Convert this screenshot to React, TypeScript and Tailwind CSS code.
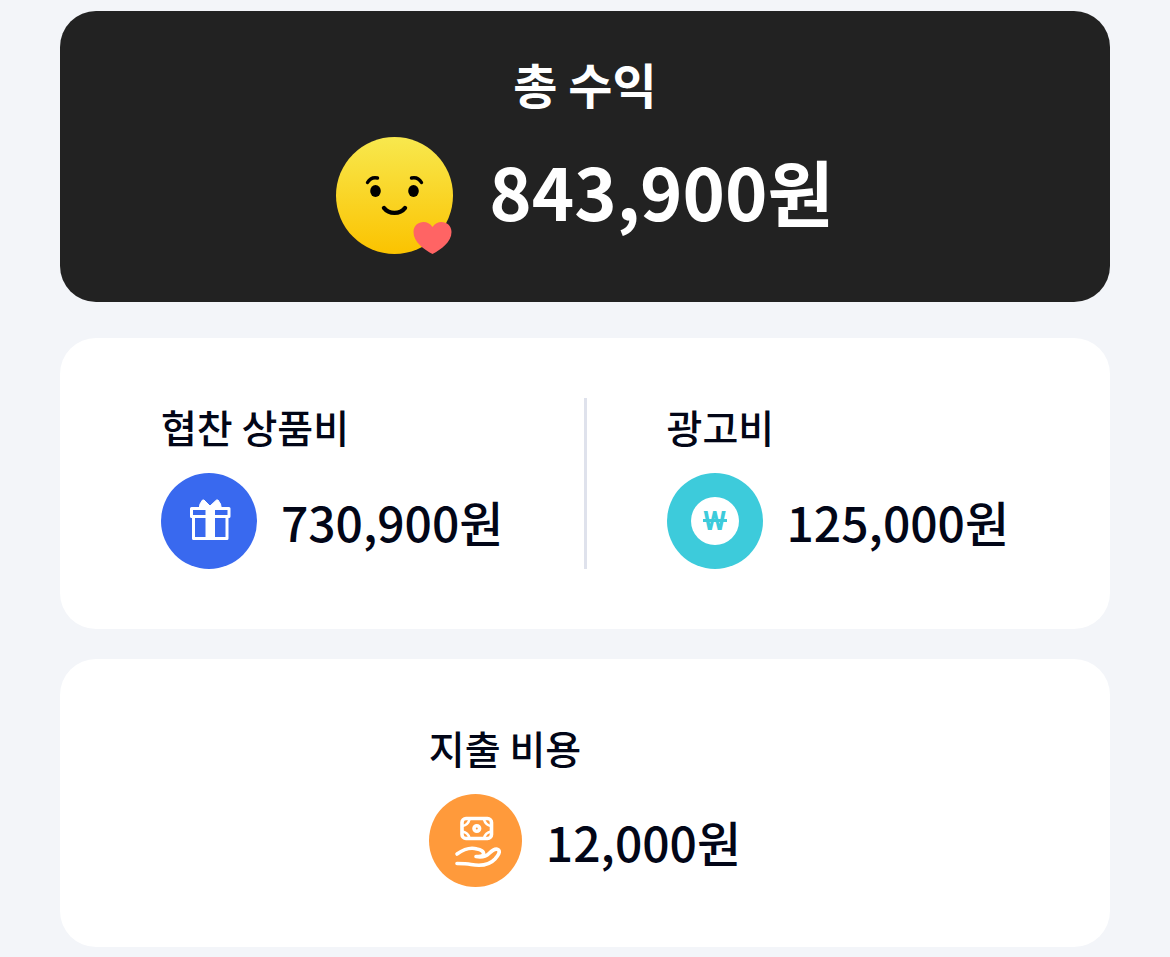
import type { ReactNode } from "react";
import clsx from "clsx";

function SmileIcon() {
  return (
    <svg viewBox="0 0 117 117" className="size-[117px] shrink-0" aria-hidden="true">
      <defs>
        <linearGradient id="face" x1="0" y1="0" x2="0" y2="1">
          <stop offset="0" stopColor="#f8e84e" />
          <stop offset="1" stopColor="#fbc300" />
        </linearGradient>
      </defs>
      <circle cx="58.5" cy="58.5" r="58.5" fill="url(#face)" />
      <ellipse cx="39.5" cy="54" rx="5.3" ry="6" />
      <ellipse cx="77.5" cy="54" rx="5.3" ry="6" />
      <g fill="none" stroke="#000" strokeLinecap="round">
        <path d="M31.5 45.5 Q35 39.5 41.5 41" strokeWidth="3.4" />
        <path d="M85.5 45.5 Q82 39.5 75.5 41" strokeWidth="3.4" />
        <path d="M48 71 C53 77.5 64 77.5 69 71" strokeWidth="4.4" />
      </g>
      <path
        d="M96.5 117 C88 112.5 77.5 105 77.5 95 C77.5 84.5 91 81.5 96.5 90 C102 81.5 115.5 84.5 115.5 95 C115.5 105 105 112.5 96.5 117 Z"
        fill="#ff6464"
      />
    </svg>
  );
}

function GiftIcon() {
  return (
    <svg viewBox="0 0 96 96" className="size-24 shrink-0" aria-hidden="true">
      <circle cx="48" cy="48" r="48" fill="#3969ef" />
      <path d="M38 36 L39 31 L41.5 27 L43 27 L49 33 L55.5 27 L57 27 L59.5 31 L60.5 36 Z" fill="#fff" stroke="#fff" strokeLinejoin="round" />
      <g fill="none" stroke="#fff" strokeWidth="3" strokeLinejoin="round">
        <rect x="30.5" y="35.5" width="37.5" height="8" />
        <path d="M32.5 43.5 V65.5 H66 V43.5" />
      </g>
      <rect x="44.5" y="34" width="9.5" height="32" fill="#fff" />
    </svg>
  );
}

function WonIcon() {
  return (
    <span className="flex size-24 shrink-0 items-center justify-center rounded-full bg-[#3dcbdb]" aria-hidden="true">
      <span className="relative flex size-12 items-center justify-center rounded-full bg-white font-['Roboto',sans-serif] text-[26px] font-bold text-[#3dcbdb]">
        W
        <span className="absolute inset-x-3 top-[22px] h-[3px] bg-[#3dcbdb]" />
      </span>
    </span>
  );
}

function SpendIcon() {
  return (
    <svg viewBox="0 0 93 93" className="size-[93px] shrink-0" aria-hidden="true">
      <circle cx="46.5" cy="46.5" r="46.5" fill="#ff9a3b" />
      <g fill="none" stroke="#fff" strokeWidth="3.6" strokeLinecap="round" strokeLinejoin="round">
        <rect x="33" y="24.5" width="29.5" height="20" rx="4" />
        <circle cx="47.8" cy="34.5" r="2.8" />
        <path d="M33.5 32 Q39 31 40.5 25.5 M62 32 Q56.500 31 55 25.5 M33.5 37.5 Q39 38.5 40.5 44 M62 37.5 Q56.5 38.5 55 44" strokeWidth="2.6" />
        <path d="M28 60 C35 55 42 53 48 55 C51.5 55.5 55 57.5 54.5 60 C54 62.5 51 62.5 47 62.5 C53 63.5 57 62.5 60 59.5 C63 56.5 66 54 69 55.5 C72 57.5 69 61.5 66 65 C60 71.5 50 72 42 70.5 C37 69.5 33 69.5 28 69.5" />
      </g>
    </svg>
  );
}

interface AmountProps {
  label: string;
  amount: string;
  icon: ReactNode;
}

function Amount({ label, amount, icon }: AmountProps) {
  return (
    <div>
      <h3 className="text-[39px] leading-[57px]">{label}</h3>
      <div className="mt-[18px] flex items-center gap-6">
        {icon}
        <p className="text-5xl">{amount}</p>
      </div>
    </div>
  );
}

function Card({ className, children }: { className?: string; children: ReactNode }) {
  return (
    <section className={clsx("flex justify-center rounded-[36px] bg-white p-[60px]", className)}>
      {children}
    </section>
  );
}

export default function App() {
  return (
    <main className="min-h-screen bg-[#f3f5f9] px-[60px] pt-[11px] pb-[10px] font-['Noto_Sans_CJK_KR',sans-serif] font-medium text-[#020617]">
      {/* Total */}
      <section className="flex flex-col items-center rounded-[36px] bg-[#222222] py-12 font-bold text-white">
        <h2 className="text-5xl leading-12">총 수익</h2>
        <div className="mt-[30px] flex items-center gap-9">
          <SmileIcon />
          <p className="pb-3 text-7xl">843,900원</p>
        </div>
      </section>

      {/* Income */}
      <Card className="mt-9 gap-20">
        <Amount label="협찬 상품비" amount="730,900원" icon={<GiftIcon />} />
        <div className="w-[3px] bg-[#dfe2ec]" />
        <Amount label="광고비" amount="125,000원" icon={<WonIcon />} />
      </Card>

      {/* Spending */}
      <Card className="mt-[30px]">
        <Amount label="지출 비용" amount="12,000원" icon={<SpendIcon />} />
      </Card>
    </main>
  );
}
